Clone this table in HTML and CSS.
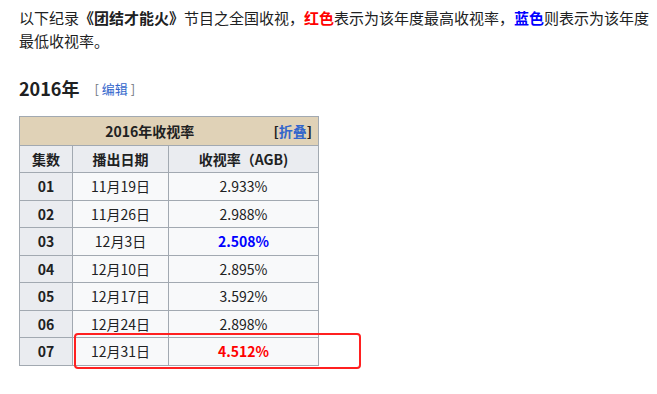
FILE: index.html
```html
<!DOCTYPE html>
<html lang="zh">
<head>
<meta charset="utf-8">
<link rel="stylesheet" href="styles.css">
</head>
<body>
<div class="content">
  <p class="intro">以下纪录<b>《团结才能火》</b>节目之全国收视，<b class="red">红色</b>表示为该年度最高收视率，<b class="blue">蓝色</b>则表示为该年度最低收视率。</p>
  <h3 class="year"><span class="year-title">2016年</span><span class="edit"><span class="br">[</span> <a class="link">编辑</a> <span class="br">]</span></span></h3>
  <table class="ratings">
    <thead>
      <tr><th colspan="3" class="caption-row"><span class="toggle">[<a class="link">折叠</a>]</span>2016年收视率</th></tr>
      <tr class="head"><th class="c1">集数</th><th class="c2">播出日期</th><th class="c3">收视率（AGB)</th></tr>
    </thead>
    <tbody>
      <tr><th>01</th><td>11月19日</td><td>2.933%</td></tr>
      <tr><th>02</th><td>11月26日</td><td>2.988%</td></tr>
      <tr><th>03</th><td>12月3日</td><td><b class="blue">2.508%</b></td></tr>
      <tr><th>04</th><td>12月10日</td><td>2.895%</td></tr>
      <tr><th>05</th><td>12月17日</td><td>3.592%</td></tr>
      <tr><th>06</th><td>12月24日</td><td>2.898%</td></tr>
      <tr><th>07</th><td>12月31日</td><td><b class="red">4.512%</b></td></tr>
    </tbody>
  </table>
</div>
<div class="highlight-box"></div>
</body>
</html>
```
FILE: styles.css
```css
html, body {
  margin: 0;
  padding: 0;
  background: #ffffff;
}
body {
  font-family: "Noto Sans CJK SC", "Noto Sans", sans-serif;
  color: #202122;
  position: relative;
  width: 657px;
  height: 394px;
  overflow: hidden;
}
.content {
  padding: 0 6px 0 19px;
}
.intro {
  margin: 7px 0 0;
  font-size: 15px;
  line-height: 22.5px;
}
.red { color: #ff0000; }
.blue { color: #0000ff; }
.year {
  margin: 23px 0 0;
  font-size: 18px;
  line-height: 27px;
  font-weight: bold;
  display: flex;
  align-items: center;
}
.edit {
  margin-left: 15px;
  font-size: 13px;
  font-weight: normal;
  line-height: 20px;
  margin-top: 1px;
}
.edit .br { color: #72777d; }
.link { color: #3366cc; text-decoration: none; }
.ratings {
  margin-top: 14px;
  border-collapse: collapse;
  font-size: 14px;
  line-height: 20.5px;
  width: 300px;
  background: #f8f9fa;
}
.ratings th, .ratings td {
  border: 1px solid #a2a9b1;
  padding: 3px 6px;
  text-align: center;
}
.ratings th {
  background: #eaecf0;
  font-weight: bold;
}
.ratings td { background: #f8f9fa; }
.ratings .caption-row {
  background: #e0d2b7;
  padding: 4px 6px 3px;
}
.toggle {
  float: right;
  font-weight: bold;
}
.c1 { width: 40px; }
.c2 { width: 83px; }
.c3 { width: 137px; }
.highlight-box {
  position: absolute;
  left: 74px;
  top: 333px;
  width: 283px;
  height: 32px;
  border: 2px solid #ff2020;
  border-radius: 4px;
}
```
